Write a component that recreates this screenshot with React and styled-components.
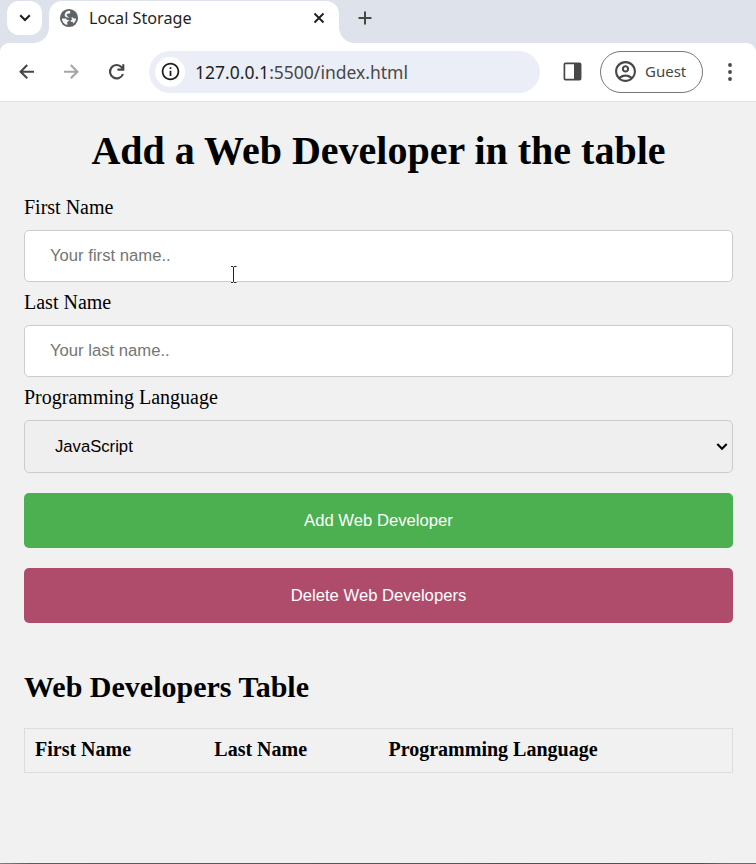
import React from "react";
import styled, { createGlobalStyle } from "styled-components";
import { MdOutlineInfo, MdOutlineAccountCircle } from "react-icons/md";

const GlobalStyle = createGlobalStyle`
  * { box-sizing: border-box; }
  body { margin: 0; background: #f1f1f1; }
`;

const Window = styled.div`
  position: relative;
  display: flex;
  flex-direction: column;
  width: 756px;
  height: 864px;
  overflow: hidden;
  background: #f1f1f1;
  color: #000;
  font-family: "Liberation Serif", "Times New Roman", serif;
`;

const TabStrip = styled.header`
  display: flex;
  height: 43px;
  padding-left: 7px;
  background: #dee2ea;
  font-family: "Noto Sans", sans-serif;
`;

const TabSearch = styled.button`
  display: flex;
  align-items: center;
  justify-content: center;
  width: 35px;
  height: 34px;
  margin: 1px 7px 0 0;
  padding: 0;
  border: 0;
  border-radius: 12px;
  background: #fff;
`;

const Tab = styled.div`
  position: relative;
  display: flex;
  align-items: center;
  width: 290px;
  height: 42px;
  margin-top: 1px;
  padding: 0 14px 8px 10px;
  border-radius: 13px 13px 0 0;
  background: #fff;

  &::before,
  &::after {
    content: "";
    position: absolute;
    bottom: 0;
    width: 15px;
    height: 15px;
  }
  &::before {
    left: -15px;
    background: radial-gradient(circle at 0 0, transparent 14.5px, #fff 15px);
  }
  &::after {
    right: -15px;
    background: radial-gradient(circle at 100% 0, transparent 14.5px, #fff 15px);
  }
`;

const TabTitle = styled.span`
  flex: 1;
  margin-left: 10px;
  color: #1f1f1f;
  font-size: 16.2px;
  line-height: 22px;
  white-space: nowrap;
`;

const NewTab = styled.div`
  display: flex;
  width: 14px;
  height: 14px;
  margin: 11px 0 0 19px;
`;

const ToolbarBack = styled.div`
  background: #dee2ea;
`;

const Toolbar = styled.nav`
  display: flex;
  align-items: center;
  height: 59px;
  padding: 0 14px 1px 16px;
  border-bottom: 1px solid #dfe0e2;
  border-radius: 9px 9px 0 0;
  background: #fff;
  color: #474747;
  font-family: "Noto Sans", sans-serif;
`;

const NavIcon = styled.span`
  display: flex;
  width: 22px;
  height: 22px;
  margin-right: ${(p) => p.$gap}px;
  color: ${(p) => (p.$disabled ? "#a6a6a6" : "#474747")};
`;

const AddressBar = styled.div`
  display: flex;
  align-items: center;
  width: 391px;
  height: 42px;
  padding-left: 6px;
  border-radius: 21px;
  background: #ebeef7;
`;

const SiteInfo = styled.span`
  display: flex;
  align-items: center;
  justify-content: center;
  width: 30px;
  height: 30px;
  border-radius: 50%;
  background: #fff;
  color: #1f1f1f;
`;

const Url = styled.span`
  margin-left: 10px;
  color: #474747;
  font-size: 17.5px;
  line-height: 24px;
  white-space: nowrap;
`;

const Host = styled.span`
  color: #1f1f1f;
`;

const SidePanel = styled.span`
  display: flex;
  margin: 0 18px 0 23px;
`;

const Profile = styled.div`
  display: flex;
  align-items: center;
  width: 103px;
  height: 42px;
  padding-left: 12px;
  border: 1px solid #747775;
  border-radius: 21px;
  font-size: 15px;
`;

const ProfileName = styled.span`
  margin-left: 7px;
  padding-bottom: 1px;
`;

const Menu = styled.span`
  display: flex;
  margin-left: 24px;
`;

const Page = styled.main`
  flex: 1;
  padding: 26px 23px 0 24px;
`;

const Title = styled.h1`
  margin: 0 0 21px;
  font-size: 40px;
  line-height: 46px;
  text-align: center;
  white-space: nowrap;
`;

const Form = styled.form`
  display: flex;
  flex-direction: column;
`;

const Label = styled.label`
  height: 24px;
  margin-bottom: 11px;
  font-size: 20px;
  line-height: 24px;
`;

const Input = styled.input`
  height: 52px;
  margin: 0 0 8px;
  padding: 0 25px;
  border: 1px solid #ccc;
  border-radius: 5px;
  outline: none;
  background: #fff;
  font-family: "Liberation Sans", Arial, sans-serif;
  font-size: 16.667px;

  &::placeholder {
    color: #757575;
  }
`;

const Select = styled.div`
  display: flex;
  align-items: center;
  justify-content: space-between;
  height: 53px;
  margin-bottom: 20px;
  padding: 0 4px 0 30px;
  border: 1px solid #ccc;
  border-radius: 5px;
  background: #efefef;
  font-family: "Liberation Sans", Arial, sans-serif;
  font-size: 16.667px;
`;

const Button = styled.button`
  height: 55px;
  margin: 0 0 20px;
  padding: 0;
  border: 0;
  border-radius: 5px;
  background: ${(p) => p.$color};
  color: #fff;
  font-family: "Liberation Sans", Arial, sans-serif;
  font-size: 16.667px;
`;

const Heading = styled.h2`
  margin: 27px 0 24px;
  font-size: 30px;
  line-height: 34px;
`;

const Table = styled.div`
  display: grid;
  grid-template-columns: 179.3px 174.2px 1fr;
  height: 45px;
  padding: 8px 10px;
  border: 1px solid #ddd;
  font-size: 20px;
  font-weight: bold;
  line-height: 24px;
`;

const TextCursor = styled.svg`
  position: absolute;
  left: 228px;
  top: 264px;
`;

const BottomEdge = styled.div`
  height: 1px;
  background: linear-gradient(90deg, #a9774c 0, #6c5a3c 30px, #615638 450px, #6b463b 540px, #7b3f45 700px, #58727c 730px);
`;

export default function App() {
  return (
    <Window>
      <GlobalStyle />
      <TabStrip>
        <TabSearch aria-label="Search tabs">
          <svg width="12" height="8" viewBox="0 0 12 8" fill="none" stroke="#1f1f1f" strokeWidth="2.1">
            <path d="M1.2 1.2 6 6l4.8-4.8" />
          </svg>
        </TabSearch>
        <Tab>
          <svg width="20" height="20" viewBox="0 0 20 20">
            <circle cx="10" cy="10" r="9.1" fill="#5f6368" />
            <path
              d="M10.8 2.8C7.8 3 6 4.2 5.7 6.7c-.1 2 1 2.7 3.2 2.8l1.3.8v2.2l-1.9 1.5v3C5.1 16.3 3 13.9 2.8 10.5l4.1.1 1.4 1.5 1.9-.2V10L7.8 7.6V5.8h2.5l1.1-1.5z"
              fill="#f4f5f6"
            />
            <path d="M12.1 9.5h1.8l1 1h2.2c-.2 2.1-1.2 3.8-2.8 5l-.8-1.7h-1.8v-1.6l1.6-.7z" fill="#f4f5f6" />
          </svg>
          <TabTitle>Local Storage</TabTitle>
          <svg width="12" height="12" viewBox="0 0 12 12" stroke="#1f1f1f" strokeWidth="1.9">
            <path d="m1.5 1.5 9 9m0-9-9 9" />
          </svg>
        </Tab>
        <NewTab>
          <svg width="14" height="14" viewBox="0 0 14 14" stroke="#474747" strokeWidth="2">
            <path d="M7 .5v13M.5 7h13" />
          </svg>
        </NewTab>
      </TabStrip>
      <ToolbarBack>
        <Toolbar>
          <NavIcon $gap={22}>
            <svg width="22" height="22" viewBox="0 0 22 22" fill="none" stroke="currentColor" strokeWidth="2.1">
              <path d="M18 10.7H4.6M11.2 4.1 4.6 10.7l6.6 6.6" />
            </svg>
          </NavIcon>
          <NavIcon $gap={24} $disabled>
            <svg width="22" height="22" viewBox="0 0 22 22" fill="none" stroke="currentColor" strokeWidth="2.1">
              <path d="M4 10.7h13.4M10.8 4.1l6.6 6.6-6.6 6.6" />
            </svg>
          </NavIcon>
          <NavIcon $gap={21}>
            <svg width="22" height="22" viewBox="0 0 22 22" fill="none" stroke="currentColor" strokeWidth="2.1">
              <path d="M17 13A6.7 6.7 0 1 1 15.7 6.2L17 7.8M17.3 3.2V8.6H11.4" />
            </svg>
          </NavIcon>
          <AddressBar>
            <SiteInfo><MdOutlineInfo size={21} /></SiteInfo>
            <Url><Host>127.0.0.1</Host>:5500/index.html</Url>
          </AddressBar>
          <SidePanel>
            <svg width="19" height="19" viewBox="0 0 19 19">
              <rect x="1.4" y="1.4" width="16.2" height="16.2" rx="1" fill="none" stroke="#474747" strokeWidth="1.7" />
              <path d="M11 1h7v17h-7z" fill="#474747" />
            </svg>
          </SidePanel>
          <Profile>
            <MdOutlineAccountCircle size={25} />
            <ProfileName>Guest</ProfileName>
          </Profile>
          <Menu>
            <svg width="6" height="20" viewBox="0 0 6 20" fill="#474747">
              <circle cx="3" cy="3" r="1.9" />
              <circle cx="3" cy="10" r="1.9" />
              <circle cx="3" cy="17" r="1.9" />
            </svg>
          </Menu>
        </Toolbar>
      </ToolbarBack>
      <Page>
        <Title>Add a Web Developer in the table</Title>
        <Form>
          <Label htmlFor="first">First Name</Label>
          <Input id="first" placeholder="Your first name.." />
          <Label htmlFor="last">Last Name</Label>
          <Input id="last" placeholder="Your last name.." />
          <Label>Programming Language</Label>
          <Select>
            JavaScript
            <svg width="12" height="9" viewBox="0 0 12 9" fill="none" stroke="#000" strokeWidth="2.1">
              <path d="M1.3 2 6 6.7 10.7 2" />
            </svg>
          </Select>
          <Button type="button" $color="#4caf50">Add Web Developer</Button>
          <Button type="button" $color="#af4c6c">Delete Web Developers</Button>
        </Form>
        <Heading>Web Developers Table</Heading>
        <Table>
          <span>First Name</span>
          <span>Last Name</span>
          <span>Programming Language</span>
        </Table>
      </Page>
      <BottomEdge />
      <TextCursor width="11" height="20" viewBox="0 0 11 20" fill="none">
        <path d="M3.5 2.5h5M3.5 18.5h5M6 2.5v16" stroke="#fff" strokeWidth="3" />
        <path d="M3 2.5h2.2M6 2.5h2.5M3 18.5h2.2M6 18.5h2.5M5.5 3v15" stroke="#222" />
      </TextCursor>
    </Window>
  );
}
